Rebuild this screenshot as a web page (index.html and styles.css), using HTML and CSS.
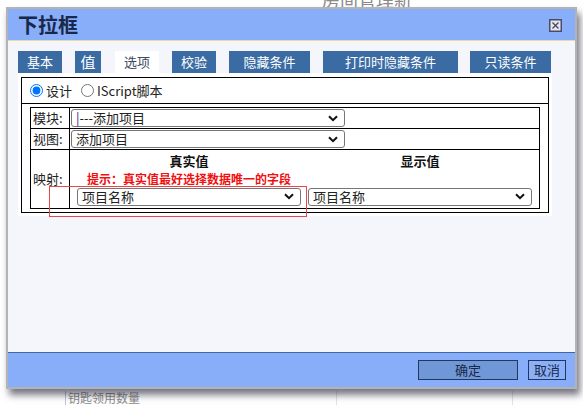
FILE: index.html
```html
<!DOCTYPE html>
<html lang="zh-CN">
<head>
    <meta charset="UTF-8">
    <title>下拉框</title>
    <link rel="stylesheet" href="styles.css">
</head>
<body>
<div class="page">
    <div class="page-title">房间管理新</div>
    <div class="page-row">
        <div class="cell cell-first"></div>
        <div class="cell cell-name">钥匙领用数量</div>
        <div class="cell cell-mid"></div>
        <div class="cell"></div>
    </div>
</div>

<div class="dialog">
    <div class="dlg-head">
        <span class="dlg-title">下拉框</span>
        <svg class="dlg-close" width="13" height="13" viewBox="0 0 13 13">
            <rect x="0.75" y="0.75" width="11.5" height="11.5" fill="#e6e6f2" stroke="#4b4b62" stroke-width="1.5"/>
            <path d="M3.5 3.5 L9.5 9.5 M9.5 3.5 L3.5 9.5" stroke="#4b4b62" stroke-width="1.4"/>
        </svg>
    </div>

    <div class="dlg-body">
        <div class="tabs">
            <span class="tab w44">基本</span>
            <span class="tab w26">值</span>
            <span class="tab w44 active">选项</span>
            <span class="tab w44">校验</span>
            <span class="tab w81">隐藏条件</span>
            <span class="tab w135">打印时隐藏条件</span>
            <span class="tab w81">只读条件</span>
        </div>

        <div class="panel">
            <div class="box">
                <div class="mode-row">
                    <label><input type="radio" name="mode" checked>设计</label>
                    <label><input type="radio" name="mode">IScript脚本</label>
                </div>
                <table class="opts">
                    <tr class="r1">
                        <td class="lbl">模块:</td>
                        <td>
                            <div class="dd dd-wide"><span><i class="bar">|</i>---添加项目</span>
                                <svg class="chev" width="10" height="7" viewBox="0 0 10 7"><path d="M1 1.2 L5 5.2 L9 1.2" fill="none" stroke="#111" stroke-width="2"/></svg>
                            </div>
                        </td>
                    </tr>
                    <tr class="r1">
                        <td class="lbl">视图:</td>
                        <td>
                            <div class="dd dd-wide"><span>添加项目</span>
                                <svg class="chev" width="10" height="7" viewBox="0 0 10 7"><path d="M1 1.2 L5 5.2 L9 1.2" fill="none" stroke="#111" stroke-width="2"/></svg>
                            </div>
                        </td>
                    </tr>
                    <tr class="r3">
                        <td class="lbl">映射:</td>
                        <td>
                            <div class="map">
                                <div class="map-col">
                                    <div class="map-head">真实值</div>
                                    <div class="hint">提示：真实值最好选择数据唯一的字段</div>
                                    <div class="dd"><span>项目名称</span>
                                        <svg class="chev" width="10" height="7" viewBox="0 0 10 7"><path d="M1 1.2 L5 5.2 L9 1.2" fill="none" stroke="#111" stroke-width="2"/></svg>
                                    </div>
                                </div>
                                <div class="map-col">
                                    <div class="map-head">显示值</div>
                                    <div class="hint"></div>
                                    <div class="dd"><span>项目名称</span>
                                        <svg class="chev" width="10" height="7" viewBox="0 0 10 7"><path d="M1 1.2 L5 5.2 L9 1.2" fill="none" stroke="#111" stroke-width="2"/></svg>
                                    </div>
                                </div>
                            </div>
                            <div class="mark"></div>
                        </td>
                    </tr>
                </table>
            </div>
        </div>
    </div>

    <div class="dlg-foot">
        <button class="btn btn-ok">确定</button>
        <button class="btn btn-cancel">取消</button>
    </div>
</div>
</body>
</html>
```

FILE: styles.css
```css
body {
    margin: 0;
    background: #ffffff;
    font-family: "Noto Sans CJK SC", "Liberation Sans", sans-serif;
    font-size: 13px;
}

/* page behind the dialog */
.page {
    height: 405px;
    display: flex;
    flex-direction: column;
    justify-content: space-between;
    overflow: hidden;
}
.page-title {
    margin-top: -11px;
    padding-left: 322px;
    font-size: 18px;
    line-height: 20px;
    color: #8a8a8a;
}
.page-row {
    display: flex;
    height: 14px;
}
.cell {
    border-left: 1px solid #dfe3ea;
    flex: 1;
}
.cell-first {
    flex: 0 0 65px;
    border-left: none;
}
.cell-name {
    flex: 0 0 268px;
    border-left: 1px solid #b8c6dc;
    padding-left: 2px;
    font-size: 12px;
    line-height: 14px;
    color: #8a8a8a;
}
.cell-mid {
    flex: 0 0 175px;
}

/* dialog */
.dialog {
    position: absolute;
    left: 6px;
    top: 7px;
    width: 571px;
    height: 382px;
    box-sizing: border-box;
    border: 2px solid #b3b3b6;
    background: #f5f6fb;
    display: flex;
    flex-direction: column;
    box-shadow: 3px 6px 7px rgba(30, 30, 50, 0.6);
}
.dlg-head {
    height: 31px;
    background: #88adf9;
    border-bottom: 1px solid #e2dca6;
    display: flex;
    align-items: center;
    justify-content: space-between;
    padding: 0 13px 0 10px;
}
.dlg-title {
    font-size: 20px;
    font-weight: bold;
    line-height: 31px;
    color: #18284a;
}
.dlg-close {
    display: block;
    margin-top: 1px;
}

.dlg-body {
    flex: 1;
    padding: 10px 0 0 10px;
}
.tabs {
    display: flex;
    height: 22px;
}
.tab {
    height: 22px;
    line-height: 22px;
    margin-right: 13px;
    text-align: center;
    background: #3a6ca3;
    color: #ffffff;
    font-size: 13px;
}
.tab.active {
    background: #ffffff;
    color: #3c4b62;
}
.w26 { width: 26px; font-size: 15px; margin-right: 14px; }
.w44 { width: 44px; }
.w81 { width: 81px; }
.w135 { width: 135px; margin-right: 12px; }

.panel {
    width: 534px;
    background: #ffffff;
    padding: 4px 3px 3px 3px;
    box-sizing: border-box;
}
.box {
    border: 1px solid #000;
    padding-bottom: 3px;
}
.mode-row {
    height: 25px;
    border-bottom: 1px solid #000;
    display: flex;
    align-items: center;
    padding-left: 3px;
    color: #222;
}
.mode-row label {
    display: flex;
    align-items: center;
    margin-right: 4px;
    line-height: 16px;
}
.mode-row input {
    margin: 0 3px 0 5px;
    width: 13px;
    height: 13px;
}

.opts {
    border-collapse: collapse;
    margin: 3px 8px 0 8px;
    width: 510px;
    border: 1px solid #000;
}
.opts td {
    border: 1px solid #000;
    padding: 0;
    vertical-align: middle;
}
.opts .lbl {
    width: 37px;
    padding-left: 2px;
    color: #222;
    line-height: 16px;
}
.r1 td {
    height: 20px;
}
.r3 td {
    height: 58px;
}
.r3 td:last-child {
    position: relative;
}

/* dropdown box */
.dd {
    height: 18px;
    box-sizing: border-box;
    border: 1px solid #767676;
    border-radius: 3px;
    background: #fff;
    color: #222;
    display: flex;
    align-items: center;
    justify-content: space-between;
    padding: 0 6px 0 4px;
    line-height: 16px;
}
.dd .bar {
    font-style: normal;
    color: #5a1a7a;
}
.chev {
    display: block;
}
.dd-wide {
    width: 274px;
    margin-left: 1px;
}

.map {
    display: grid;
    grid-template-columns: 224px 224px;
    column-gap: 7px;
    padding: 0 7px 2px 7px;
}
.map-head {
    text-align: center;
    font-weight: bold;
    line-height: 19px;
    color: #111;
}
.hint {
    height: 18px;
    text-align: center;
    color: #f01010;
    font-weight: bold;
    font-size: 12px;
    line-height: 18px;
}
.mark {
    position: absolute;
    left: -21px;
    top: 36px;
    width: 256px;
    height: 29px;
    border: 1px solid #e84848;
}

.dlg-foot {
    height: 34px;
    background: #88adf9;
    border-top: 1px solid #3d68a3;
    display: flex;
    align-items: center;
    justify-content: flex-end;
    padding-right: 9px;
}
.btn {
    height: 20px;
    border: 1px solid #22365f;
    font-family: "Noto Sans CJK SC", "Liberation Sans", sans-serif;
    font-size: 13px;
    line-height: 16px;
    color: #1a2746;
    padding: 0;
    margin-left: 10px;
}
.btn-ok {
    width: 100px;
    background: #7098d6;
}
.btn-cancel {
    width: 38px;
    background: #8bb0f8;
}
```
